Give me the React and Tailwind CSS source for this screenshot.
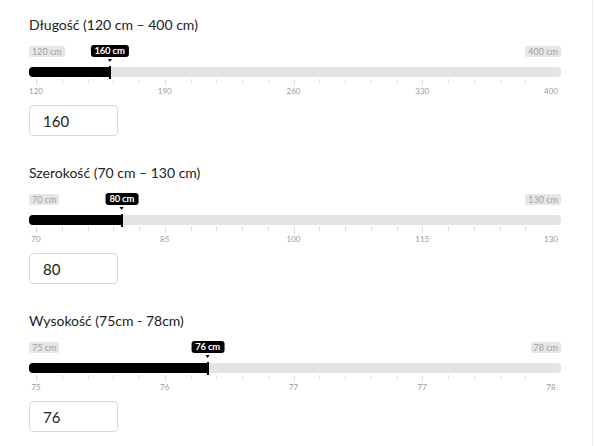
import React, { useState } from "react";

const sliders = [
  { title: "Długość (120 cm – 400 cm)", min: 120, max: 400, value: 160, labels: ["120", "190", "260", "330", "400"] },
  { title: "Szerokość (70 cm – 130 cm)", min: 70, max: 130, value: 80, labels: ["70", "85", "100", "115", "130"] },
  { title: "Wysokość (75cm - 78cm)", min: 75, max: 78, value: 76, labels: ["75", "76", "77", "77", "78"] },
];

const GRID_WIDTH = 515;
const GRID_OFFSET = 7;

const RangeSlider = ({ title, min, max, value, labels }) => {
  const [current, setCurrent] = useState(value);
  const pct = (value - min) / (max - min);
  const handleX = GRID_OFFSET + pct * GRID_WIDTH;

  return (
    <section className="pt-[15px] pb-[12px]">
      <h2 className="text-[14px] leading-5 text-[#222]">{title}</h2>

      <div className="relative mt-[11px] w-[532px]">
        <div className="flex justify-between">
          <span className="rounded-[2px] bg-[#e6e6e6] px-[3px] text-[9px] leading-[11px] text-[#a3a3a3]">{min} cm</span>
          <span className="rounded-[2px] bg-[#e6e6e6] px-[3px] text-[9px] leading-[11px] text-[#a3a3a3]">{max} cm</span>
        </div>

        {/* tooltip over the handle */}
        <div
          className="absolute top-[-1px] flex -translate-x-1/2 flex-col items-center"
          style={{ left: handleX }}
        >
          <span className="rounded-[3px] bg-black px-[4px] text-[9.5px] font-bold leading-[12px] tracking-[-0.2px] text-white">
            {value} cm
          </span>
          <span className="mt-[2px] h-0 w-0 border-x-[2px] border-t-[3px] border-x-transparent border-t-black" />
        </div>

        <div className="relative mt-[10px] h-[10px] rounded-[4px] bg-[#e3e4e8]">
          <div className="absolute inset-y-0 left-0 rounded-l-[4px] bg-black" style={{ width: handleX }} />
          <div className="absolute top-[-1px] h-[13px] w-[2px] bg-black" style={{ left: handleX - 1 }} />
        </div>

        <div className="mx-[7px] w-[515px]">
          <div className="mt-[2px] flex h-[6px] items-start">
            {Array.from({ length: 20 }, (_, i) => (
              <span
                key={i}
                className={`flex-1 border-l border-[#dcdcdf] ${i % 5 === 0 ? "h-[6px]" : "h-[4px]"}`}
              />
            ))}
          </div>
          <div className="mt-[1px] flex h-[10px] justify-between">
            {labels.map((label, i) => (
              <span key={i} className="flex w-0 justify-center text-[8px] leading-[10px] text-[#9a9a9a]">
                {label}
              </span>
            ))}
          </div>
        </div>
      </div>

      <input
        className="mt-[9px] h-[31px] w-[89px] rounded-[4px] border border-[#d9d9d9] px-[13px] text-[15px] text-[#222] outline-none"
        value={current}
        onChange={(e) => setCurrent(e.target.value)}
      />
    </section>
  );
};

export default function App() {
  return (
    <div className="h-[446px] w-[593px] border-r border-[#ececec] bg-white pl-[29px] font-['Lato',sans-serif]">
      {sliders.map((slider) => (
        <RangeSlider key={slider.title} {...slider} />
      ))}
    </div>
  );
}
